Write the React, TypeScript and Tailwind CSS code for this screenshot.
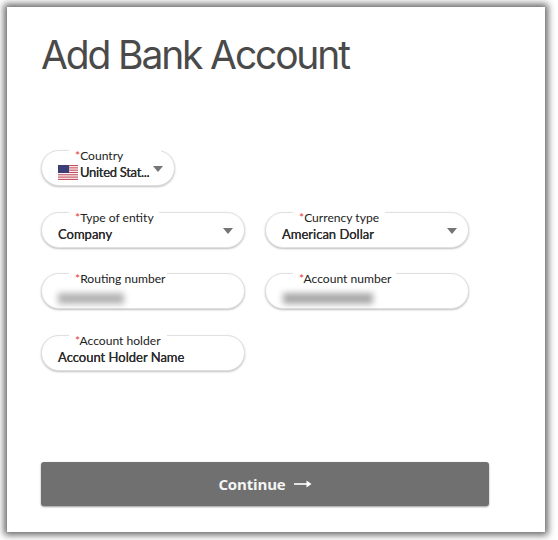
import { ReactNode } from "react";

function Caret({ className }: { className: string }) {
  return (
    <svg viewBox="0 0 10 6" className={className}>
      <path d="M0 0h10L5 6z" fill="#757575" />
    </svg>
  );
}

function UsFlag() {
  return (
    <svg viewBox="0 0 20 15" className="h-[15px] w-[20px] shrink-0">
      <rect width="20" height="15" fill="#fff" />
      {[0, 2.3, 4.6, 6.9, 9.2, 11.5, 13.8].map((y) => (
        <rect key={y} y={y} width="20" height="1.15" fill="#c4505f" />
      ))}
      <rect width="11" height="8" fill="#3c3f77" />
    </svg>
  );
}

function Field({
  label,
  labelWidth,
  className,
  children,
}: {
  label: string;
  labelWidth: string;
  className: string;
  children: ReactNode;
}) {
  return (
    <div
      className={`relative h-[36px] rounded-[18px] border border-[#e0e0e0] bg-white pl-[16px] shadow-[0_1px_2px_rgba(0,0,0,0.25)] ${className}`}
    >
      <div
        className={`absolute left-[27px] top-[-2px] h-[14px] whitespace-nowrap bg-white pl-[6px] text-[12.1px] leading-[14px] text-[#222] ${labelWidth}`}
      >
        <span className="text-[#e53935]">*</span>
        {label}
      </div>
      <div className="flex h-full items-end pb-[5px] text-[13px] leading-[16px] text-[#2b2b2b] [text-shadow:0_0_0.5px_#2b2b2b]">
        {children}
      </div>
    </div>
  );
}

export default function App() {
  return (
    <div className="h-[540px] w-[558px] bg-white p-[7px] pb-[8px] pr-[13px] font-['Lato',sans-serif]">
      <div className="flex h-full flex-col bg-white pl-[34px] pr-[56px] pb-[26px] shadow-[0_0_7px_3px_rgba(0,0,0,0.6)]">
        <h1 className="mt-[22px] whitespace-nowrap font-['Inter',sans-serif] text-[39px] font-normal leading-[52px] tracking-[-2.15px] text-[#4a4a4a]">
          Add Bank Account
        </h1>

        <div className="mt-[69px] flex flex-col gap-[25.5px]">
          <Field label="Country" labelWidth="w-[92px]" className="w-[134px]">
            <div className="flex items-center gap-[2px]">
              <UsFlag />
              <span className="tracking-[-0.3px]">United Stat...</span>
            </div>
            <Caret className="absolute right-[11px] top-[15px] h-[6px] w-[10px]" />
          </Field>

          <div className="grid grid-cols-[204px_204px] gap-x-[20px] gap-y-[25.5px]">
            <Field label="Type of entity" labelWidth="w-[90px]" className="">
              Company
              <Caret className="absolute right-[11px] top-[15px] h-[6px] w-[10px]" />
            </Field>
            <Field label="Currency type" labelWidth="w-[92px]" className="">
              American Dollar
              <Caret className="absolute right-[11px] top-[15px] h-[6px] w-[10px]" />
            </Field>
            <Field label="Routing number" labelWidth="w-[98px]" className="">
              <div className="mb-[-1px] h-[11px] w-[66px] bg-[#b3b3b3] blur-[3px]" />
            </Field>
            <Field label="Account number" labelWidth="w-[103px]" className="">
              <div className="mb-[-1px] ml-[1px] h-[11px] w-[90px] bg-[#a8a8a8] blur-[3px]" />
            </Field>
            <Field label="Account holder" labelWidth="w-[98px]" className="">
              Account Holder Name
            </Field>
          </div>
        </div>

        <button className="mt-auto flex h-[44px] w-[448px] items-center justify-center gap-[8px] rounded-[3px] bg-[#707070] font-['Open_Sans',sans-serif] text-[15px] font-bold tracking-[-0.15px] text-[#f5f5f5] shadow-[0_1px_2px_rgba(0,0,0,0.4)]">
          Continue
          <svg viewBox="0 0 18 10" className="h-[10px] w-[18px]">
            <path d="M0 5h15" stroke="#fff" strokeWidth="1.6" />
            <path d="M12.5 1.6L17.5 5l-5 3.4z" fill="#fff" />
          </svg>
        </button>
      </div>
    </div>
  );
}
